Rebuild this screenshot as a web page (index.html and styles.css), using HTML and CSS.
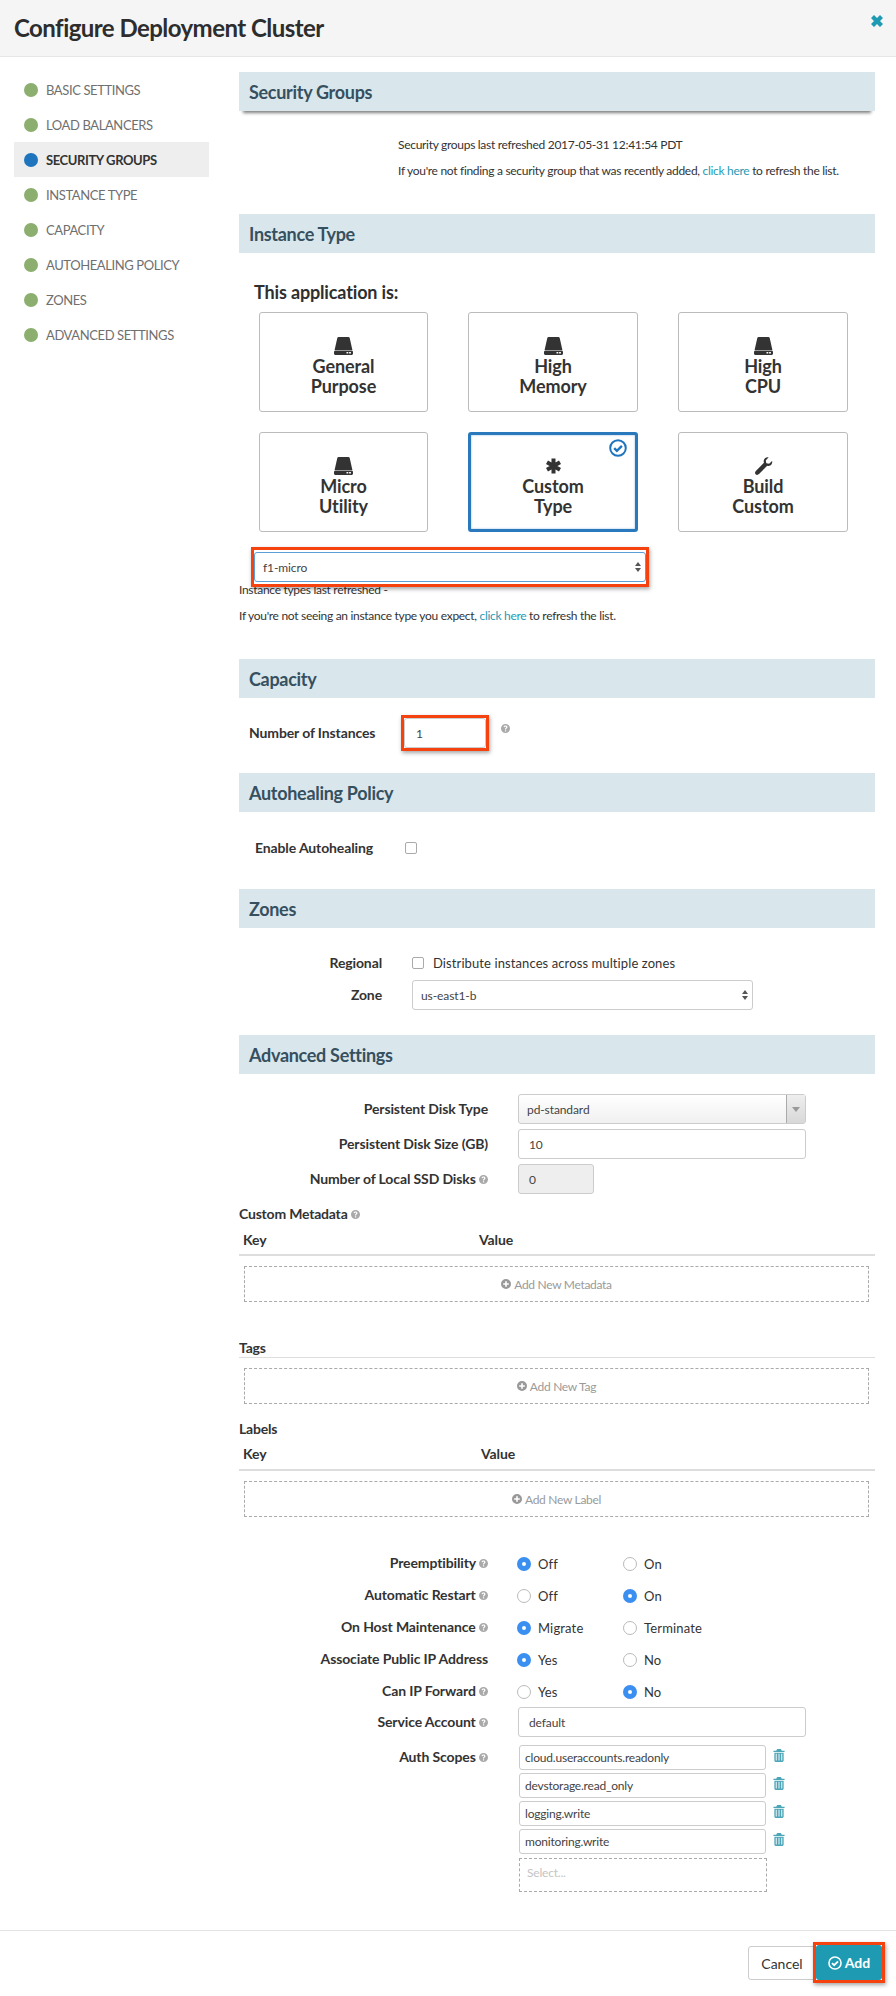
FILE: index.html
```html
<!DOCTYPE html>
<html lang="en">
<head>
<meta charset="utf-8">
<title>Configure Deployment Cluster</title>
<link rel="stylesheet" href="styles.css">
</head>
<body>
<svg class="defs" width="0" height="0" aria-hidden="true">
  <defs>
    <symbol id="i-hdd" viewBox="0 0 19 18">
      <path d="M4.500 0h10c.6 0 1 .3 1.200.9L18.400 13H.6L3.300.9C3.500.3 3.900 0 4.500 0z"/>
      <path fill-rule="evenodd" d="M1.500 13.600h16c.8 0 1.500.7 1.500 1.500v1.400c0 .8-.7 1.500-1.500 1.500h-16C.7 18 0 17.300 0 16.500v-1.400c0-.8.7-1.500 1.500-1.500zM12.500 15.100v1.500h1.800v-1.500zm2.600 0v1.500h1.800v-1.500z"/>
    </symbol>
    <symbol id="i-help" viewBox="0 0 16 16">
      <path fill-rule="evenodd" d="M8 0a8 8 0 1 1 0 16A8 8 0 0 1 8 0zM7 11v2.400h2.200V11zM8 2.600C6 2.600 4.700 3.700 4.400 5.500l2.100.4c.1-.8.6-1.300 1.400-1.300.8 0 1.300.4 1.300 1 0 .5-.3.800-1 1.300-.9.600-1.200 1.200-1.200 2v.8h2.200v-.6c0-.4.200-.6.800-1 1-.7 1.500-1.400 1.500-2.500 0-1.900-1.500-3-3.500-3z"/>
    </symbol>
    <symbol id="i-plus" viewBox="0 0 16 16">
      <path fill-rule="evenodd" d="M8 0a8 8 0 1 1 0 16A8 8 0 0 1 8 0zM6.700 3.500v3.200H3.500v2.600h3.200v3.200h2.600V9.300h3.200V6.700H9.300V3.500z"/>
    </symbol>
    <symbol id="i-trash" viewBox="0 0 12 14">
      <path fill-rule="evenodd" d="M4 0h4l1 2h3v1.300H0V2h3zM1 4h10v8.500c0 .8-.6 1.500-1.300 1.500H2.300C1.600 14 1 13.300 1 12.500zm1.500 1.200v7.300h1V5.200zm3 0v7.300h1V5.200zm3 0v7.300h1V5.200z"/>
    </symbol>
    <symbol id="i-check" viewBox="0 0 18 18">
      <circle cx="9" cy="9" r="7.800" fill="none" stroke="currentColor" stroke-width="2"/>
      <path d="M5.200 9.200l2.700 2.700 5-5" fill="none" stroke="currentColor" stroke-width="2.400"/>
    </symbol>
    <symbol id="i-star" viewBox="0 0 18 18">
      <path d="M9 1.500v15M2.500 5.250l13 7.500M15.500 5.250l-13 7.500" fill="none" stroke="currentColor" stroke-width="4"/>
    </symbol>
    <symbol id="i-wrench" viewBox="0 0 16 16">
      <path d="M15.600 3.500c.3.900.2 2-.4 2.900-.9 1.300-2.500 1.800-3.900 1.300L4 15.200c-.9.900-2.200 1-3 .2s-.7-2.100.2-3L8.400 5C7.900 3.500 8.300 1.900 9.600.9 10.500.2 11.600 0 12.600.3L10 3l.5 2.500 2.500.6z"/>
    </symbol>
  </defs>
</svg>

<header class="topbar">
  <h1 class="title">Configure Deployment Cluster</h1>
  <svg class="close" viewBox="0 0 12 12" aria-hidden="true"><path d="M3 0l3 3 3-3 3 3-3 3 3 3-3 3-3-3-3 3-3-3 3-3-3-3z"/></svg>
</header>

<div class="layout">
  <nav class="sidebar">
    <a class="step"><span class="dot"></span>Basic Settings</a>
    <a class="step"><span class="dot"></span>Load Balancers</a>
    <a class="step active"><span class="dot"></span>Security Groups</a>
    <a class="step"><span class="dot"></span>Instance Type</a>
    <a class="step"><span class="dot"></span>Capacity</a>
    <a class="step"><span class="dot"></span>Autohealing Policy</a>
    <a class="step"><span class="dot"></span>Zones</a>
    <a class="step"><span class="dot"></span>Advanced Settings</a>
  </nav>

  <main class="main">
    <h2 class="band raised">Security Groups</h2>
    <div class="note-block indented">
      <p class="note">Security groups last refreshed 2017-05-31 12:41:54 PDT</p>
      <p class="note">If you're not finding a security group that was recently added, <a class="link">click here</a> to refresh the list.</p>
    </div>

    <h2 class="band">Instance Type</h2>
    <h3 class="app-title">This application is:</h3>
    <div class="cards">
      <div class="card"><svg class="card-icon"><use href="#i-hdd"/></svg><span>General<br>Purpose</span></div>
      <div class="card"><svg class="card-icon"><use href="#i-hdd"/></svg><span>High<br>Memory</span></div>
      <div class="card"><svg class="card-icon"><use href="#i-hdd"/></svg><span>High<br>CPU</span></div>
      <div class="card"><svg class="card-icon"><use href="#i-hdd"/></svg><span>Micro<br>Utility</span></div>
      <div class="card selected">
        <svg class="card-check"><use href="#i-check"/></svg>
        <svg class="card-icon"><use href="#i-star"/></svg>
        <span>Custom<br>Type</span>
      </div>
      <div class="card"><svg class="card-icon"><use href="#i-wrench"/></svg><span>Build<br>Custom</span></div>
    </div>
    <div class="flag flag-select">
      <div class="field select focused"><span>f1-micro</span><span class="updown"></span></div>
    </div>
    <div class="note-block refreshed">
      <p class="note">Instance types last refreshed -</p>
      <p class="note">If you're not seeing an instance type you expect, <a class="link">click here</a> to refresh the list.</p>
    </div>

    <h2 class="band">Capacity</h2>
    <div class="row-capacity">
      <span class="label">Number of Instances</span>
      <div class="flag flag-count"><div class="field count">1</div></div>
      <svg class="help help-raised"><use href="#i-help"/></svg>
    </div>

    <h2 class="band">Autohealing Policy</h2>
    <div class="row-heal">
      <span class="label">Enable Autohealing</span>
      <span class="checkbox"></span>
    </div>

    <h2 class="band">Zones</h2>
    <div class="zones">
      <span class="label right">Regional</span>
      <div class="inline"><span class="checkbox"></span><span class="plain">Distribute instances across multiple zones</span></div>
      <span class="label right">Zone</span>
      <div class="field select"><span>us-east1-b</span><span class="updown"></span></div>
    </div>

    <h2 class="band">Advanced Settings</h2>
    <div class="form form-disks">
      <span class="label right">Persistent Disk Type</span>
      <div class="field combo"><span class="combo-value">pd-standard</span><span class="combo-btn"></span></div>
      <span class="label right">Persistent Disk Size (GB)</span>
      <div class="field num">10</div>
      <span class="label right">Number of Local SSD Disks <svg class="help"><use href="#i-help"/></svg></span>
      <div class="field num disabled">0</div>
    </div>

    <h4 class="sub sub-meta">Custom Metadata <svg class="help"><use href="#i-help"/></svg></h4>
    <div class="kv-head"><span class="key">Key</span><span class="val">Value</span></div>
    <div class="add"><svg class="add-icon"><use href="#i-plus"/></svg>Add New Metadata</div>

    <h4 class="sub sub-tags">Tags</h4>
    <div class="add"><svg class="add-icon"><use href="#i-plus"/></svg>Add New Tag</div>

    <h4 class="sub sub-labels">Labels</h4>
    <div class="kv-head"><span class="key">Key</span><span class="val val-labels">Value</span></div>
    <div class="add"><svg class="add-icon"><use href="#i-plus"/></svg>Add New Label</div>

    <div class="radios">
      <span class="label right">Preemptibility <svg class="help"><use href="#i-help"/></svg></span>
      <span class="radio on">Off</span><span class="radio">On</span>
      <span class="label right">Automatic Restart <svg class="help"><use href="#i-help"/></svg></span>
      <span class="radio">Off</span><span class="radio on">On</span>
      <span class="label right">On Host Maintenance <svg class="help"><use href="#i-help"/></svg></span>
      <span class="radio on">Migrate</span><span class="radio">Terminate</span>
      <span class="label right">Associate Public IP Address</span>
      <span class="radio on">Yes</span><span class="radio">No</span>
      <span class="label right">Can IP Forward <svg class="help"><use href="#i-help"/></svg></span>
      <span class="radio">Yes</span><span class="radio on">No</span>
    </div>

    <div class="form form-account">
      <span class="label right">Service Account <svg class="help"><use href="#i-help"/></svg></span>
      <div class="field account">default</div>
    </div>

    <div class="form form-scopes">
      <span class="label right scopes-label">Auth Scopes <svg class="help"><use href="#i-help"/></svg></span>
      <div class="scopes">
        <div class="scope"><span class="scope-tag">cloud.useraccounts.readonly</span><svg class="trash"><use href="#i-trash"/></svg></div>
        <div class="scope"><span class="scope-tag">devstorage.read_only</span><svg class="trash"><use href="#i-trash"/></svg></div>
        <div class="scope"><span class="scope-tag">logging.write</span><svg class="trash"><use href="#i-trash"/></svg></div>
        <div class="scope"><span class="scope-tag">monitoring.write</span><svg class="trash"><use href="#i-trash"/></svg></div>
        <div class="scope-select">Select...</div>
      </div>
    </div>
  </main>
</div>

<footer class="footer">
  <button class="btn cancel">Cancel</button>
  <div class="flag flag-add"><button class="btn primary"><svg class="btn-icon"><use href="#i-check"/></svg>Add</button></div>
</footer>
</body>
</html>
```
FILE: styles.css
```css
*, *::before, *::after { box-sizing: border-box; }
html, body { margin: 0; padding: 0; }
body {
  width: 896px;
  height: 1996px;
  overflow: hidden;
  display: flex;
  flex-direction: column;
  background: #fff;
  color: #333;
  font-family: Lato, "Liberation Sans", sans-serif;
  font-size: 12px;
}
.defs { position: absolute; }
h1, h2, h3, h4, p { margin: 0; }

.topbar {
  height: 57px;
  flex: none;
  display: flex;
  justify-content: space-between;
  padding: 0 13px 0 14px;
  background: #f5f5f5;
  border-bottom: 1px solid #e6e6e6;
}
.title { font-size: 24px; font-weight: 700; line-height: 55px; letter-spacing: -.55px; color: #2d2d2d; }
.close { width: 12px; height: 12px; margin-top: 15px; fill: #1f9ab3; }

.layout { flex: 1; display: flex; }
.sidebar { width: 239px; flex: none; padding: 15px 30px 0 14px; }
.step {
  display: flex;
  align-items: center;
  height: 35px;
  padding-left: 10px;
  color: #6f6f6f;
  font-size: 13px;
  letter-spacing: -.4px;
  text-transform: uppercase;
}
.step.active { background: #eee; color: #333; font-weight: 700; }
.dot { width: 14px; height: 14px; margin-right: 8px; border-radius: 50%; background: #8cae6f; }
.active .dot { background: #1f75bd; }

.main { width: 636px; flex: none; padding-top: 15px; }
.band {
  height: 39px;
  padding-left: 10px;
  background: #d9e7ec;
  color: #36505f;
  font-size: 18px;
  font-weight: 700;
  line-height: 41px;
  letter-spacing: -.3px;
}
.raised { box-shadow: 0 6px 3px -4px rgba(0, 0, 0, .5); }
.indented { height: 103px; padding: 26px 0 0 159px; }
.note { margin-bottom: 10px; font-size: 12px; line-height: 16px; letter-spacing: -.3px; color: #333; }
.link { color: #1f9ab3; }

.app-title { margin: 28px 0 0 15px; font-size: 18px; font-weight: 700; line-height: 22px; letter-spacing: -.15px; color: #2f2f2f; }
.cards {
  display: grid;
  grid-template-columns: 169px 170px 170px;
  grid-auto-rows: 100px;
  column-gap: 40px;
  row-gap: 20px;
  margin: 9px 0 0 20px;
}
.card {
  position: relative;
  display: flex;
  flex-direction: column;
  align-items: center;
  padding-top: 24px;
  border: 1px solid #bbb;
  border-radius: 3px;
  font-size: 18px;
  font-weight: 700;
  line-height: 19.500px;
  letter-spacing: -.1px;
  text-align: center;
  color: #333;
}
.card-icon { width: 19px; height: 18px; margin-bottom: 2px; flex: none; fill: #333; color: #333; }
.selected { border: 3px solid #2a79bd; padding-top: 22px; box-shadow: inset 0 0 2px rgba(42, 121, 189, .6); }
.card-check { position: absolute; top: 4px; right: 8px; width: 18px; height: 18px; color: #1f75bd; }

.flag { border: 3px solid #f5420f; box-shadow: 1px 2px 4px rgba(0, 0, 0, .35); }
.flag-select { position: relative; z-index: 1; width: 398px; height: 40px; margin: 15px 0 0 12px; padding-top: 2px; }
.flag-count { width: 88px; height: 36px; flex: none; }
.flag-add { height: 41px; margin: -4px 0 0 -3px; }

.field {
  display: flex;
  align-items: center;
  height: 30px;
  padding: 0 8px;
  border: 1px solid #ccc;
  border-radius: 3px;
  background: #fff;
  font-size: 12px;
  letter-spacing: -.1px;
  color: #444;
}
.select { justify-content: space-between; padding-right: 4px; }
.focused { border-color: #5b9fd6; }
.num { padding-left: 10px; }
.updown { display: flex; flex-direction: column; gap: 2px; flex: none; }
.updown::before { content: ""; border: 3px solid transparent; border-top: 0; border-bottom: 4px solid #555; }
.updown::after { content: ""; border: 3px solid transparent; border-bottom: 0; border-top: 4px solid #555; }
.refreshed { height: 77px; margin-top: -5px; }

.label { font-size: 14px; font-weight: 700; line-height: 16px; letter-spacing: -.12px; color: #333; }
.right { text-align: right; }
.help { width: 9px; height: 9px; fill: #a9a9a9; }

.row-capacity { display: flex; align-items: flex-start; height: 75px; padding: 17px 0 0 10px; }
.row-capacity .label { width: 152px; margin-top: 10px; }
.count { width: 82px; padding-left: 11px; }
.help-raised { margin: 9px 0 0 12px; }

.row-heal { display: flex; align-items: center; height: 77px; padding: 0 0 5px 16px; }
.row-heal .label { width: 150px; }
.checkbox { display: inline-block; width: 12px; height: 12px; flex: none; border: 1px solid #aaa; border-radius: 2px; background: #fff; }

.zones {
  display: grid;
  grid-template-columns: 143px 341px;
  grid-template-rows: 24px 30px;
  column-gap: 30px;
  row-gap: 5px;
  align-items: center;
  align-content: start;
  height: 107px;
  padding-top: 23px;
}
.inline { display: flex; align-items: center; gap: 9px; }
.plain { font-size: 13px; letter-spacing: .1px; color: #333; }

.form { display: grid; grid-template-columns: 249px 288px; column-gap: 30px; align-items: center; }
.form-disks { padding-top: 20px; row-gap: 5px; }
.combo { padding: 0; background: linear-gradient(to bottom, #fff, #f0f0f0); }
.combo-value { flex: 1; padding-left: 8px; }
.combo-btn { position: relative; width: 19px; height: 100%; flex: none; border-left: 1px solid #aaa; background: linear-gradient(to bottom, #eee, #d8d8d8); }
.combo-btn::after { content: ""; position: absolute; left: 5px; top: 12px; border: 4px solid transparent; border-top: 5px solid #999; border-bottom: 0; }
.disabled { width: 76px; background: #eee; }

.sub { font-size: 14px; font-weight: 700; line-height: 16px; letter-spacing: -.2px; color: #333; }
.sub-meta { margin-top: 12px; }
.kv-head {
  display: flex;
  height: 24px;
  margin-top: 10px;
  padding-left: 4px;
  border-bottom: 2px solid #ddd;
  font-size: 14px;
  font-weight: 700;
  line-height: 16px;
  letter-spacing: -.1px;
}
.key { width: 236px; }
.val-labels { margin-left: 2px; }
.add {
  display: flex;
  align-items: center;
  justify-content: center;
  height: 36px;
  margin: 10px 6px 0 5px;
  border: 1px dashed #aaa;
  color: #9a9a9a;
  font-size: 12px;
  letter-spacing: -.3px;
}
.add-icon { width: 10px; height: 10px; margin-right: 3px; fill: #999; }
.sub-tags { height: 18px; margin-top: 38px; border-bottom: 1px solid #ddd; }
.sub-labels { margin-top: 17px; }
.sub-labels + .kv-head { height: 25px; margin-top: 9px; }

.radios {
  display: grid;
  grid-template-columns: 249px 106px auto;
  grid-auto-rows: 32px;
  align-items: center;
  margin-top: 31px;
}
.radios .label { margin-top: -3px; }
.radios .radio { margin-left: 29px; }
.radio { display: flex; align-items: center; font-size: 13px; letter-spacing: .15px; color: #333; }
.radio::before {
  content: "";
  width: 14px;
  height: 14px;
  flex: none;
  margin-right: 7px;
  border: 1px solid #bbb;
  border-radius: 50%;
  background: #fff;
}
.radio.on::before { border: 5.500px solid #3b8ff0; }

.form-account { margin-top: -1px; }
.account { padding-left: 10px; }
.form-scopes { grid-template-columns: 249px 280px; column-gap: 31px; align-items: start; margin-top: 8px; }
.scopes-label { margin-top: 4px; }
.scopes { display: flex; flex-direction: column; gap: 3px; }
.scope { display: flex; align-items: flex-start; }
.scope-tag { width: 247px; height: 25px; padding-left: 5px; border: 1px solid #ccc; border-radius: 3px; font-size: 12px; line-height: 23px; letter-spacing: -.2px; color: #444; }
.trash { width: 12px; height: 13px; margin: 4px 0 0 7px; fill: #4da6b8; }
.scope-select { width: 248px; height: 34px; margin-top: 1px; padding-left: 7px; border: 1px dashed #aaa; font-size: 12px; line-height: 28px; letter-spacing: -.2px; color: #c4c4c4; }

.footer {
  flex: none;
  height: 66px;
  display: flex;
  justify-content: flex-end;
  align-items: flex-start;
  padding: 15px 11px 0 0;
  border-top: 1px solid #e3e3e3;
}
.btn { height: 34px; border-radius: 3px; font-family: inherit; font-size: 14px; }
.cancel { width: 68px; border: 1px solid #ccc; background: #fff; color: #333; }
.primary {
  display: flex;
  align-items: center;
  justify-content: center;
  width: 66px;
  height: 35px;
  border: 0;
  background: #1f9ab3;
  color: #fff;
  font-weight: 700;
}
.btn-icon { width: 14px; height: 14px; margin-right: 3px; }
```
